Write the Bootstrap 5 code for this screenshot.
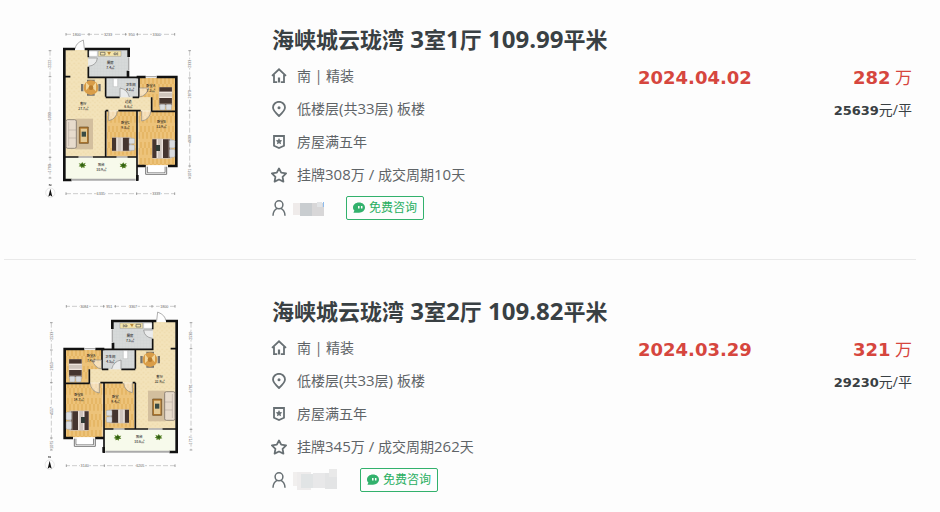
<!DOCTYPE html>
<html lang="zh-CN">
<head>
<meta charset="utf-8">
<meta name="viewport" content="width=device-width, initial-scale=1">
<title>海峡城云珑湾 成交记录</title>
<link href="https://cdn.jsdelivr.net/npm/bootstrap@5.3.0/dist/css/bootstrap.min.css" rel="stylesheet">
<style>
body { background: #fdfdfd; color: #394043; font-family: "Open Sans", "Noto Sans CJK SC", sans-serif; font-size: 14px; }
.deal-list { margin: 0 24px 0 4px; }
.deal { padding: 35px 4px 35px 36px; border-bottom: 1px solid #e9e9e9; }
.deal:first-child { padding-top: 23px; }
.deal:last-child { border-bottom: 0; padding-bottom: 12px; }
.plan { width: 160px; height: 182px; margin-right: 72px; }
.plan-labels { font: 500 10px "Noto Sans CJK SC", sans-serif; fill: #222; text-anchor: middle; }
.plan-sizes { font: 11px "Liberation Sans", sans-serif; fill: #666; text-anchor: middle; }
.deal-info { flex: 0 1 366px; }
.deal-title { font-size: 22px; line-height: 32px; margin-bottom: 4px; }
.deal-title a { color: #394043; }
.deal-title .num { font-size: 24px; line-height: 24px; }
.fact { height: 33px; color: #5f6467; }
.fact .num { font-size: 15px; line-height: 20px; }
.fact-icon { width: 16px; height: 16px; margin-left: -1px; margin-right: 10px; fill: none; stroke: #687074; stroke-width: 1.8; }
.agent-icon { margin-right: 6px; }
.masked { height: 21px; margin-right: 21px; }
.btn-ask { --bs-btn-color: #27ae60; --bs-btn-border-color: #32b16c; --bs-btn-border-radius: 2px; --bs-btn-hover-color: #fff; --bs-btn-hover-bg: #32b16c; --bs-btn-padding-x: 6px; --bs-btn-padding-y: 0; --bs-btn-font-size: 12px; height: 24px; line-height: 22px; }
.ask-icon { width: 12px; height: 12px; margin-right: 4px; }
.deal-side { padding-top: 39px; line-height: 32px; }
.figure-red { color: #d6463e; font-size: 17px; }
.figure-red b { font-family: "DejaVu Sans", sans-serif; font-size: 18px; }
.unit-price b { font-family: "DejaVu Sans", sans-serif; font-size: 13px; }
</style>
<script src="https://cdn.jsdelivr.net/npm/bootstrap@5.3.0/dist/js/bootstrap.bundle.min.js"></script>
</head>
<body>
<svg class="position-absolute" width="0" height="0" aria-hidden="true">
  <defs>
    <pattern id="wood" width="12" height="48" patternUnits="userSpaceOnUse"><path fill="#e6b766" d="M0 0h12v48H0z"/><path fill="#edc37a" d="M0 0h6v30H0zM6 20h6v28H6z"/></pattern>
    <pattern id="tile" width="9" height="9" patternUnits="userSpaceOnUse"><path fill="#d6d9d9" d="M0 0h9v9H0z"/><path stroke="#c9cccc" fill="none" d="M0 0h9M0 0v9"/></pattern>
    <pattern id="stone" width="14" height="14" patternUnits="userSpaceOnUse"><path fill="#f3e3ba" d="M0 0h14v14H0z"/><path fill="#eedaaa" d="M2 2h5v4H2zM9 8h4v4H9z"/></pattern>
    <g id="bed">
      <path fill="#cfc5bd" d="M0 0h58v60H0z"/><path fill="#45352f" d="M0 2h13v56H0zM32 2h16v56H32z"/><path fill="#eee4dd" d="M13 2h4v56h-4zM28 2h4v56h-4z"/>
      <path fill="#554139" d="M48 2h4v56h-4z"/><rect x="51" y="4" width="17" height="24" rx="4" fill="#d9dce0" stroke="#777"/><rect x="51" y="32" width="17" height="24" rx="4" fill="#d9dce0" stroke="#777"/>
    </g>
    <g id="plant" fill="#517d22"><path d="M0-9 3-4l7-3-3 6 5 3-6 2 1 5-6-2-4 3-1-5-7-1 4-4-4-5 7 1z"/><circle r="4" fill="#2f5d16"/></g>
  </defs>
  <symbol id="home" viewBox="0 0 16 16"><path d="M1 7.800 8 1.300l7 6.500M3 6.700v7.500h3.200M13 6.700v7.500H9.800"/><path d="M8 9.500v5" stroke-width="2.200"/></symbol>
  <symbol id="pin" viewBox="0 0 16 16"><path d="M8 15C4.500 11.800 2 9.600 2 6.600a6 5.800 0 0 1 12 0C14 9.600 11.500 11.800 8 15z"/><circle cx="8" cy="6.700" r="1.500" fill="#687074" stroke="none"/></symbol>
  <symbol id="shield" viewBox="0 0 16 16"><path d="M3 2h10v9.700L8 14l-5-2.300z"/><path fill="#687074" stroke="none" d="m8 4 1 2.100 2.300.3-1.700 1.600.5 2.300L8 9.200l-2.100 1.100.5-2.300-1.700-1.600 2.300-.3z"/></symbol>
  <symbol id="star" viewBox="0 0 16 16"><path stroke-linejoin="round" d="m8 1.500 2.200 4.200 4.900.7-3.500 3.400.8 4.800L8 12.500l-4.400 2.100.8-4.800L.9 6.400l4.900-.7z"/></symbol>
  <symbol id="person" viewBox="0 0 16 16"><path stroke-width="1.500" d="M8 .8a3.900 4 0 0 1 0 8 3.900 4 0 0 1 0-8M2 15.800c.1-4 1.700-6.300 4.300-7.400M14 15.800c-.1-4-1.700-6.300-4.300-7.400"/></symbol>
  <symbol id="chat" viewBox="0 0 12 12"><path fill="#32b16c" d="M6 .5c3.500 0 6 2.200 6 5s-2.500 5.200-6 5.200H.4l1-2.100C.5 7.800 0 6.700 0 5.500c0-2.800 2.500-5 6-5z"/><path stroke="#fff" stroke-width="1.500" d="M5.800 4v2.500M8.700 4v2.500"/></symbol>
  <symbol id="plan" viewBox="0 0 483 555">
    <path fill="url(#stone)" d="M76 90h69v82h52v60h140v40H197v138H76z"/>
    <path fill="url(#tile)" d="M145 90h120v82H145zM200 174h97v58H200z"/>
    <path fill="url(#wood)" d="M298 174h107v98H337v-40h-39zM200 274h91v136h-91zM295 274h110v162H295z"/>
    <path fill="#f7faeb" d="M76 412h215v68H76z"/>
    <g fill="none" stroke="#111">
      <path stroke-width="5" d="M145 87v25M145 140v32h52v58M145 172h121M197 232h42M278 232h19M297 171v61M266 172h30M73 170h18M73 411h43M158 411h42M197 272v139M197 272h8M235 272h67M291 272v211M334 274h75M335 232v43M291 438h26M230 411h-30M262 411h29"/>
      <path stroke-width="8" d="M105 87H73v393h22M134 87h132v24M264 152v20M290 171h27M350 171h59v267h-25M291 438h26M292 465v17"/>
    </g>
    <g fill="none" stroke="#aaa" stroke-width="4"><path d="M266 112v38M318 170h32M116 411h40M230 411h32"/><path stroke-width="6" d="M94 479h193"/><path stroke="#777" stroke-width="3" d="M317 440v23h63v-23M322 440v18h53v-18"/></g>
    <path fill="#fff" d="M325 436h48v21h-48z"/>
    <g fill="#fff" fill-opacity=".5" stroke="#888" stroke-width="2"><path d="M106 86q0-16 24-26l3 26M145 114h27q-2 22-27 25M240 231v-27q22 4 28 27M298 204h28q-6 23-28 27M206 273v29q24-5 26-29M305 273v30q24-4 28-30"/></g>
    <path fill="#f5e5ab" stroke="#777" d="M175 93h68v16h-68z"/><path fill="none" stroke="#555" stroke-width="2" d="M181 97h14v8h-14zM222 99h7v5h-7zM233 97v9"/><path fill="#b98a3c" d="M202 96h11l-6 10z"/><path fill="#fff" stroke="#999" d="M147 93h25v16h-25zM220 176h13v24h-13z"/>
    <g fill="#74736f"><path d="M141 179h23v7h-23zM141 220h23v7h-23zM123 192h7v22h-7zM175 192h7v22h-7z"/><circle cx="153" cy="203" r="22" fill="#d99d48"/><path fill="#f2d79c" d="m138 187 12 12-12 12zM168 187v27l-12-12z"/><circle cx="153" cy="203" r="7" fill="#b77b2c"/></g>
    <path fill="#d3bf9e" d="M107 296h52v92h-52z"/><rect x="78" y="299" width="31" height="86" rx="5" fill="#e7dbcc" stroke="#665e57" stroke-width="2"/><path stroke="#8b8178" d="M86 306v72M86 330h22M86 354h22" fill="none"/><path fill="#b17930" stroke="#684c25" stroke-width="2" d="M118 321h27v49h-27z"/><path fill="#e4c993" d="M122 326h19v40h-19z"/><path fill="#394b44" d="M125 335h13v15h-13z"/>
    <use href="#bed" transform="translate(337 356)"/><path fill="#313b35" d="M348 375h12v18h-12z"/>
    <use href="#bed" transform="translate(216 352) scale(1 .7)"/>
    <use href="#bed" transform="translate(397 202) rotate(90) scale(1 .67)"/>
    <use href="#plant" transform="translate(127 435)"/><use href="#plant" transform="translate(250 436)"/>
    <path stroke="#b5b5b5" stroke-width="2" stroke-dasharray="15 6" fill="none" d="M78 43h326M78 521h326M30 92v382M449 92v382"/>
    <path stroke="#777" stroke-width="2" fill="none" d="M78 39v8M147 39v8M257 39v8M292 39v8M404 39v8M78 517v8M290 517v8M404 517v8M26 92h8M26 170h8M26 412h8M26 474h8M445 92h8M445 174h8M445 272h8M445 438h8M445 474h8"/>
    <path fill="#fdfdfd" d="M96 36h28v14H96zM190 36h28v14h-28zM265 36h20v14h-20zM336 36h28v14h-28zM168 514h28v14h-28zM335 514h28v14h-28zM24 118h13v26H24zM24 276h13v26H24zM24 434h13v22H24zM443 118h13v26h-13zM443 210h13v26h-13zM443 344h13v26h-13zM443 448h13v20h-13z"/>
  </symbol>
  <symbol id="compass" viewBox="0 0 32 44"><circle cx="16" cy="28" r="14" fill="none" stroke="#bbb"/><path fill="#111" d="m16 16 6 24-6-4-6 4z"/><path d="M13 8V2l5 6V2" fill="none" stroke="#555" stroke-width="2"/></symbol>
</svg>

<main>
<ul class="deal-list list-unstyled">
  <li class="deal d-flex align-items-start">
    <a href="#deal-1" class="flex-shrink-0" aria-label="户型图 3室1厅">
      <svg class="plan d-block" viewBox="0 9 480 546">
        <use href="#plan" width="483" height="555"/>
        <use href="#compass" x="15" y="490" width="32" height="44"/>
        <g class="plan-labels"><text x="211" y="133">厨房</text><text x="211" y="148">7.4㎡</text><text x="272" y="197">卫生间</text><text x="270" y="212">4.3㎡</text><text x="332" y="200">卧室A</text><text x="332" y="215">7.3㎡</text><text x="130" y="255">客厅</text><text x="130" y="270">27.7㎡</text><text x="265" y="250">过道</text><text x="265" y="265">6.6㎡</text><text x="256" y="312">卧室C</text><text x="256" y="327">9.8㎡</text><text x="364" y="309">卧室B</text><text x="364" y="324">13.9㎡</text><text x="184" y="439">阳台</text><text x="184" y="454">10.9㎡</text></g>
        <g class="plan-sizes"><text x="110" y="47">1800</text><text x="204" y="47">3233</text><text x="275" y="47">950</text><text x="350" y="47">3300</text><text x="182" y="525">6335</text><text x="349" y="525">3339</text><text transform="translate(34 131) rotate(-90)">2222</text><text transform="translate(34 289) rotate(-90)">6900</text><text transform="translate(34 445) rotate(-90)">1780</text><text transform="translate(453 131) rotate(-90)">2333</text><text transform="translate(453 223) rotate(-90)">2870</text><text transform="translate(453 357) rotate(-90)">4600</text><text transform="translate(453 458) rotate(-90)">1071</text></g>
      </svg>
    </a>
    <div class="deal-info">
      <h2 class="deal-title fw-bold text-nowrap"><a class="text-decoration-none" href="#deal-1" id="deal-1">海峡城云珑湾<span class="num"> 3</span>室<span class="num">1</span>厅<span class="num"> 109.99</span>平米</a></h2>
      <div class="fact d-flex align-items-center"><svg class="fact-icon"><use href="#home"/></svg>南 | 精装</div>
      <div class="fact d-flex align-items-center"><svg class="fact-icon"><use href="#pin"/></svg><div>低楼层<span class="num">(</span>共<span class="num">33</span>层<span class="num">) </span>板楼</div></div>
      <div class="fact d-flex align-items-center"><svg class="fact-icon"><use href="#shield"/></svg>房屋满五年</div>
      <div class="fact d-flex align-items-center"><svg class="fact-icon"><use href="#star"/></svg><div>挂牌<span class="num">308</span>万<span class="num"> / </span>成交周期<span class="num">10</span>天</div></div>
      <div class="fact d-flex align-items-center"><svg class="fact-icon agent-icon"><use href="#person"/></svg>
        <svg class="masked" width="32" viewBox="0 0 32 21" aria-hidden="true"><path fill="#efebea" d="M0 6h7v12H0z"/><path fill="#c9cdd0" d="M7 6h12v13H7z"/><path fill="#d8d7d8" d="M19 6h12v13H19z"/><path fill="#e2e4e6" d="M24 5h5v5h-5z"/><path fill="#8cbcf0" d="M30 5h1v5h-1z"/></svg>
        <button type="button" class="btn btn-ask d-inline-flex align-items-center"><svg class="ask-icon"><use href="#chat"/></svg>免费咨询</button></div>
    </div>
    <div class="deal-side figure-red"><b>2024.04.02</b></div>
    <div class="deal-side ms-auto text-end text-nowrap"><div class="figure-red"><b>282</b> 万</div><div class="unit-price"><b>25639</b>元/平</div></div>
  </li>
  <li class="deal d-flex align-items-start">
    <a href="#deal-2" class="flex-shrink-0" aria-label="户型图 3室2厅">
      <svg class="plan d-block" viewBox="0 9 480 546">
        <use href="#plan" width="483" height="555" transform="translate(483 0) scale(-1 1)"/>
        <use href="#compass" x="13" y="490" width="32" height="44"/>
        <g class="plan-labels"><text x="270" y="135">厨房</text><text x="270" y="150">7.5㎡</text><text x="211" y="199">卫生间</text><text x="211" y="214">4.5㎡</text><text x="153" y="196">卧室A</text><text x="153" y="211">7.4㎡</text><text x="359" y="258">客厅</text><text x="359" y="273">32.9㎡</text><text x="226" y="319">卧室</text><text x="226" y="334">9.4㎡</text><text x="116" y="313">卧室B</text><text x="116" y="328">14.7㎡</text><text x="298" y="439">阳台</text><text x="298" y="454">10.6㎡</text></g>
        <g class="plan-sizes"><text x="373" y="47">1800</text><text x="279" y="47">3367</text><text x="208" y="47">951</text><text x="133" y="47">3084</text><text x="301" y="525">6205</text><text x="134" y="525">3140</text><text transform="translate(457 131) rotate(-90)">2530</text><text transform="translate(457 289) rotate(-90)">6781</text><text transform="translate(457 445) rotate(-90)">1717</text><text transform="translate(38 131) rotate(-90)">2533</text><text transform="translate(38 223) rotate(-90)">2853</text><text transform="translate(38 357) rotate(-90)">4557</text><text transform="translate(38 458) rotate(-90)">1075</text></g>
      </svg>
    </a>
    <div class="deal-info">
      <h2 class="deal-title fw-bold text-nowrap"><a class="text-decoration-none" href="#deal-2" id="deal-2">海峡城云珑湾<span class="num"> 3</span>室<span class="num">2</span>厅<span class="num"> 109.82</span>平米</a></h2>
      <div class="fact d-flex align-items-center"><svg class="fact-icon"><use href="#home"/></svg>南 | 精装</div>
      <div class="fact d-flex align-items-center"><svg class="fact-icon"><use href="#pin"/></svg><div>低楼层<span class="num">(</span>共<span class="num">33</span>层<span class="num">) </span>板楼</div></div>
      <div class="fact d-flex align-items-center"><svg class="fact-icon"><use href="#shield"/></svg>房屋满五年</div>
      <div class="fact d-flex align-items-center"><svg class="fact-icon"><use href="#star"/></svg><div>挂牌<span class="num">345</span>万<span class="num"> / </span>成交周期<span class="num">262</span>天</div></div>
      <div class="fact d-flex align-items-center"><svg class="fact-icon agent-icon"><use href="#person"/></svg>
        <svg class="masked" width="46" viewBox="0 0 46 21" aria-hidden="true"><path fill="#f1efee" d="M0 3h8v14H0z"/><path fill="#eeecec" d="M4 3h14v18H4z"/><path fill="#e1e4e5" d="M8 5h12v14H8z"/><path fill="#e8e8e9" d="M20 4h12v15H20z"/><path fill="#e3e4e5" d="M32 4h12v16H32z"/><path fill="#e9e9e9" d="M36 0h8v8h-8z"/></svg>
        <button type="button" class="btn btn-ask d-inline-flex align-items-center"><svg class="ask-icon"><use href="#chat"/></svg>免费咨询</button></div>
    </div>
    <div class="deal-side figure-red"><b>2024.03.29</b></div>
    <div class="deal-side ms-auto text-end text-nowrap"><div class="figure-red"><b>321</b> 万</div><div class="unit-price"><b>29230</b>元/平</div></div>
  </li>
</ul>
</main>
</body>
</html>
